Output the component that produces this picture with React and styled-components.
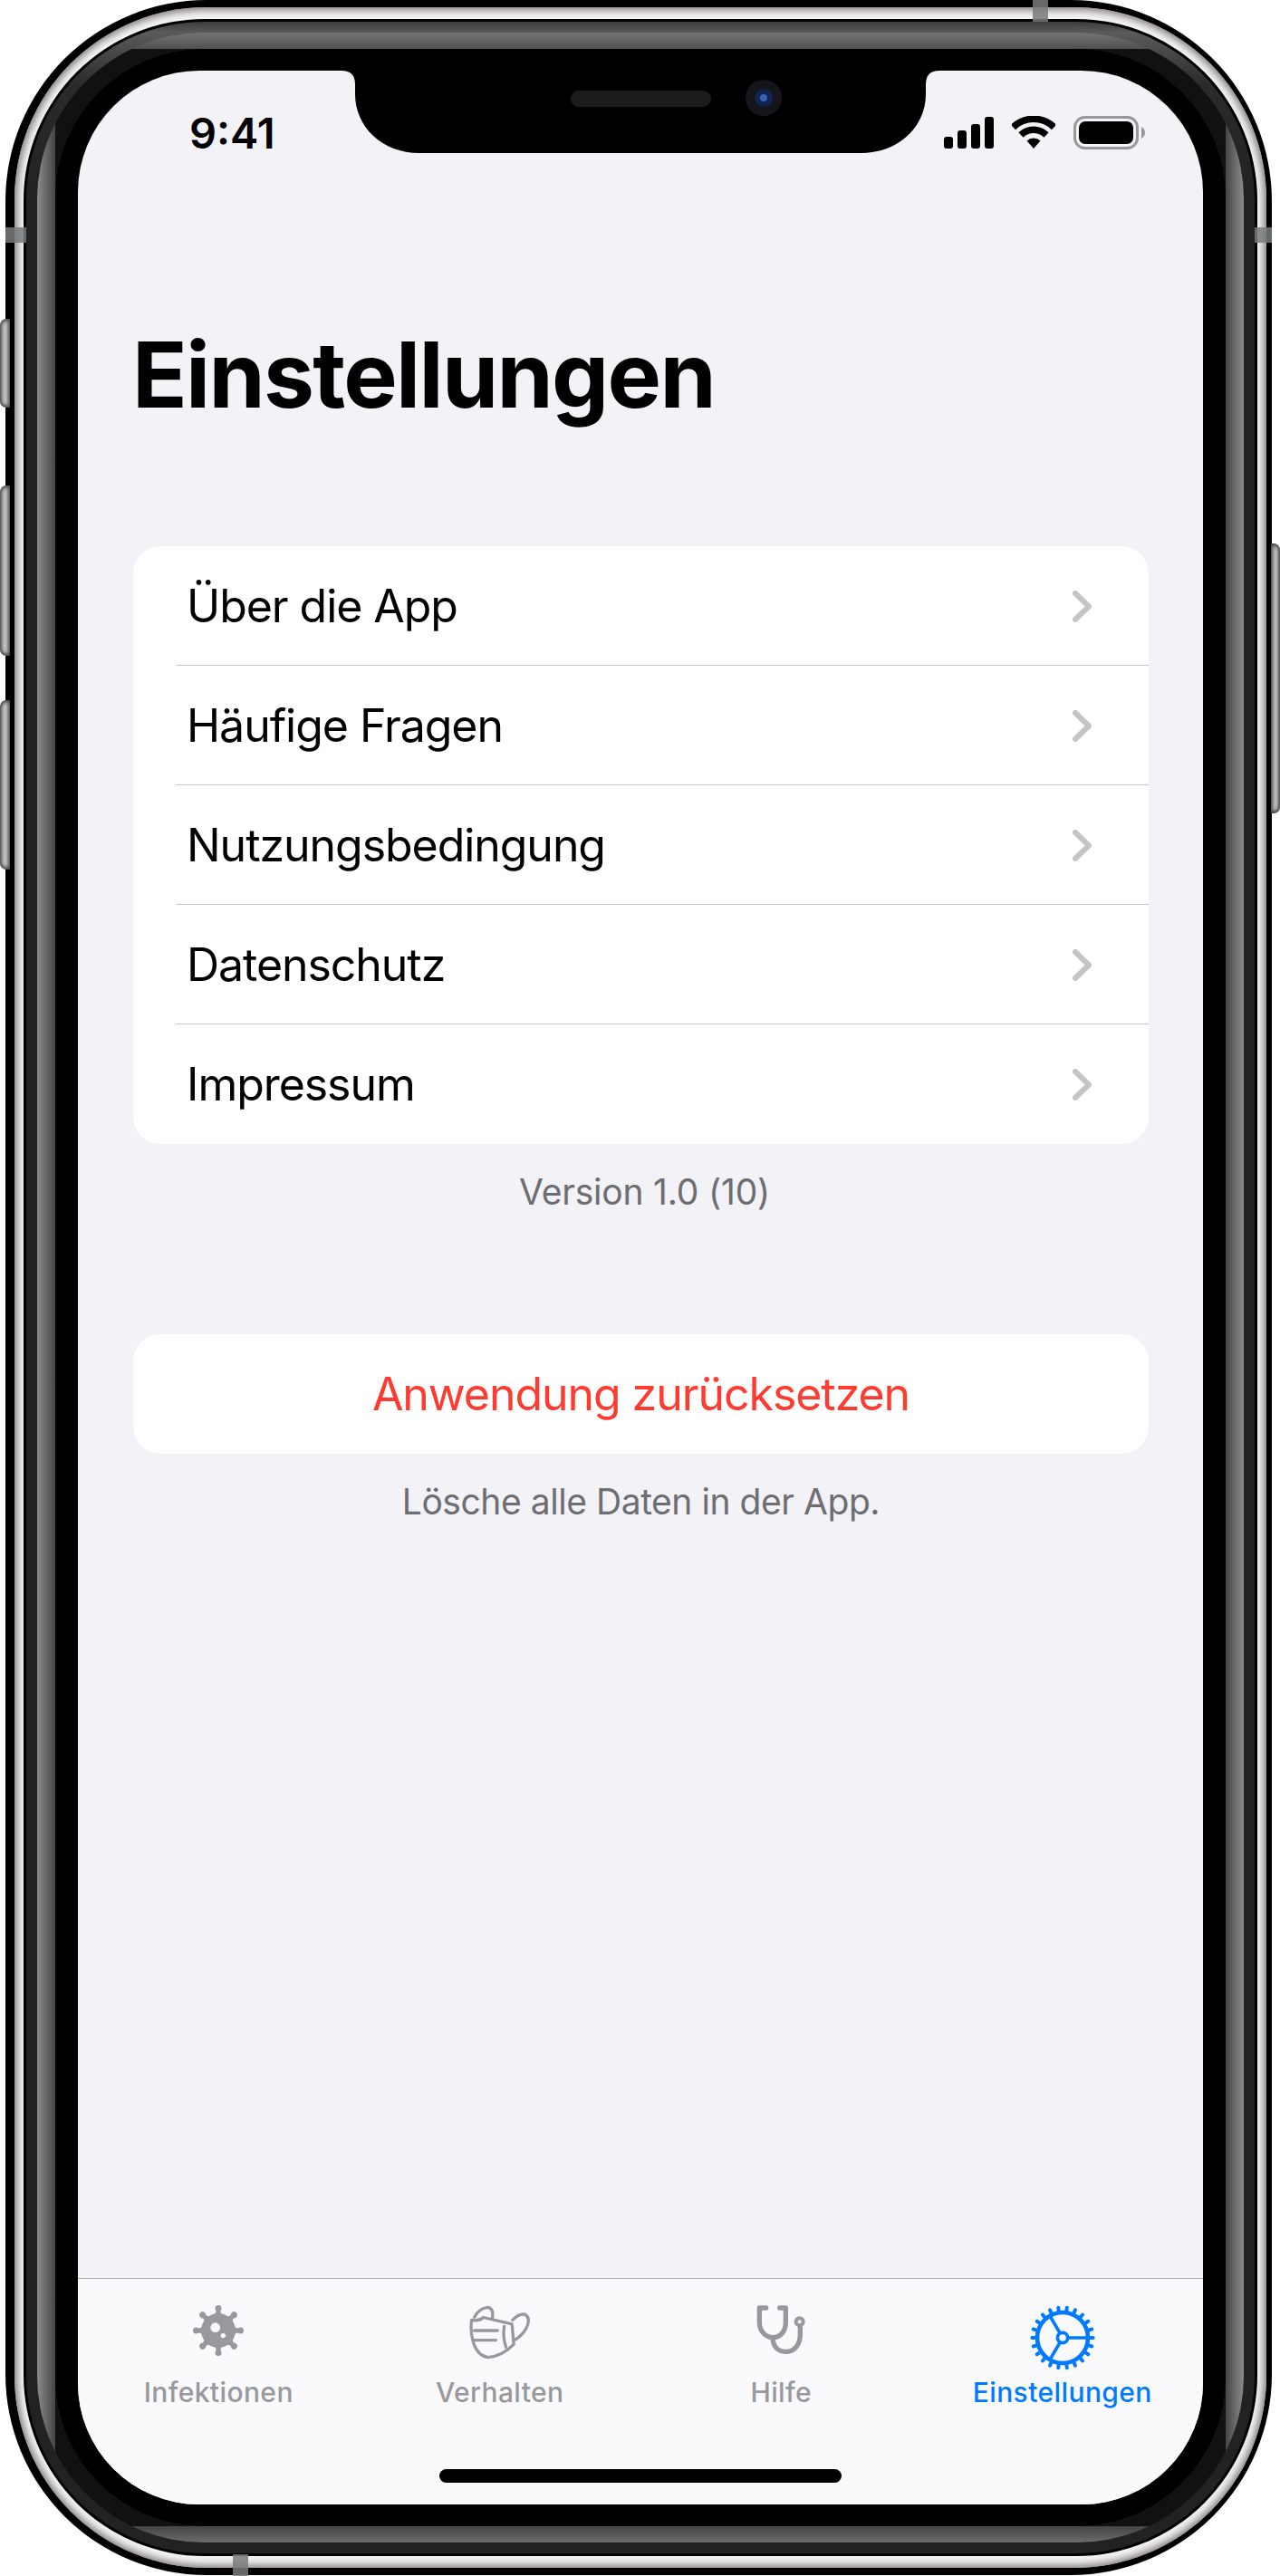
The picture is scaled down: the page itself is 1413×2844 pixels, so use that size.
import React from 'react';
import styled, { createGlobalStyle } from 'styled-components';

const Global = createGlobalStyle`
  html, body { margin: 0; padding: 0; background: #fff; }
  #root { width: 1413px; height: 2844px; overflow: hidden; }
`;

const Page = styled.div`
  position: relative;
  width: 1413px;
  height: 2844px;
  padding: 0 9px 1px 6px;
  box-sizing: border-box;
  font-family: Inter, "Noto Sans", "Liberation Sans", sans-serif;
  background: #fff;
`;
const Shell = styled.div`
  height: 100%;
  box-sizing: border-box;
  background: #000;
  border-radius: 222px;
  padding: 8px 6px 8px 10px;
`;
const SteelBand = styled.div`
  height: 100%;
  box-sizing: border-box;
  border-radius: 212px;
  padding: 13px 10px 13px 10px;
  background: #f4f4f4;
  box-shadow: inset 0 0 9px 3px #7d7876;
`;
const InnerEdge = styled.div`
  height: 100%;
  box-sizing: border-box;
  border-radius: 200px;
  background: #000;
  padding: 3px;
`;
const DarkBand = styled.div`
  height: 100%;
  box-sizing: border-box;
  border-radius: 197px;
  padding: 12px 12px 12px 12px;
  background: linear-gradient(180deg, #3c3c3c 0, #5a5a5a 12px, #2a2a2a 70px, #222 200px, #222 100%);
`;
const GreyBand = styled.div`
  height: 100%;
  box-sizing: border-box;
  border-radius: 184px;
  padding: 18px 20px;
  background:
    linear-gradient(90deg, #8c8c8c 0, #444 20px, transparent 20px, transparent calc(100% - 20px), #444 calc(100% - 20px), #8c8c8c 100%),
    linear-gradient(180deg, #747474 0, #505050 18px, #111 18px, #111 calc(100% - 18px), #444 calc(100% - 18px), #6c6c6c 100%);
`;
const Bezel = styled.div`
  height: 100%;
  box-sizing: border-box;
  border-radius: 164px;
  padding: 24px 25px;
  background: #000;
`;
const Screen = styled.div`
  position: relative;
  height: 100%;
  border-radius: 134px;
  background: #f2f2f7;
  overflow: hidden;
  display: flex;
  flex-direction: column;
`;
const SideButton = styled.div`
  position: absolute;
  left: 0;
  width: 11px;
  top: ${p => p.$top}px;
  height: ${p => p.$h}px;
  border-radius: 7px 0 0 7px;
  background: #cfcfcf;
  box-shadow: inset 0 0 4px 2px #3a3a3a;
`;
const PowerButton = styled.div`
  position: absolute;
  right: 0;
  top: 600px;
  width: 10px;
  height: 298px;
  border-radius: 0 7px 7px 0;
  background: #d4d4d4;
  box-shadow: inset 0 0 4px 2px #333;
`;
const Antenna = styled.div`
  position: absolute;
  background: rgba(120, 122, 124, 0.85);
  ${p => p.$css}
`;
const Notch = styled.svg`
  position: absolute;
  left: 291px;
  top: 0;
`;
const StatusBar = styled.div`
  height: 136px;
  flex: none;
  display: flex;
  align-items: center;
  justify-content: space-between;
  box-sizing: border-box;
  padding: 0 64px 0 123px;
`;
const Time = styled.div`
  font-size: 47px;
  font-weight: 600;
  color: #000;
  line-height: 1;
`;
const StatusIcons = styled.div`
  display: flex;
  align-items: center;
  gap: 20px;
`;
const Title = styled.h1`
  margin: 140px 0 0 60px;
  font-size: 100px;
  line-height: 120px;
  font-weight: 700;
  letter-spacing: -1.7px;
  color: #000;
`;
const Content = styled.div`
  display: flex;
  flex-direction: column;
  padding: 0 60px 0 61px;
  margin-top: 129px;
`;
const Card = styled.div`
  background: #fff;
  border-radius: 30px;
  overflow: hidden;
`;
const Row = styled.div`
  position: relative;
  height: 132px;
  display: flex;
  align-items: center;
  justify-content: space-between;
  box-sizing: border-box;
  padding: 0 63px 0 59px;
  font-size: 50px;
  letter-spacing: -1.05px;
  color: #000;
  &:not(:last-child)::after {
    content: '';
    position: absolute;
    left: 47px;
    right: 0;
    bottom: 0;
    height: 1px;
    background: #c6c6c8;
  }
`;
const ResetRow = styled(Row)`
  justify-content: center;
  padding: 0;
  color: #ff3b30;
`;
const Footnote = styled.div`
  text-align: center;
  font-size: 39px;
  line-height: 48px;
  letter-spacing: ${p => (p.$dx ? '-0.2px' : '-0.45px')};
  color: #6d6d72;
  margin-top: 29px;
  transform: translateX(${p => p.$dx || 0}px);
`;
const ResetSpacer = styled.div`
  height: 133px;
`;
const TabBar = styled.div`
  margin-top: auto;
  flex: none;
  border-top: 1px solid #a9a9ac;
  background: #fafafc;
  display: flex;
  flex-direction: column;
  align-items: center;
`;
const Tabs = styled.div`
  align-self: stretch;
  display: grid;
  grid-template-columns: repeat(4, 1fr);
`;
const Tab = styled.div`
  display: flex;
  flex-direction: column;
  align-items: center;
  padding-top: 29px;
  color: ${p => (p.$active ? '#007aff' : '#98989d')};
`;
const IconSlot = styled.div`
  height: 78px;
`;
const TabLabel = styled.div`
  font-size: 30px;
  line-height: 36px;
  font-weight: 500;
  letter-spacing: 0.4px;
`;
const HomeIndicator = styled.div`
  width: 444px;
  height: 15px;
  border-radius: 8px;
  background: #000;
  margin: 67px 0 24px;
`;

const Chevron = () => (
  <svg width="21" height="35" viewBox="0 0 21 35" fill="none" stroke="#c4c4c7" strokeWidth="6" strokeLinecap="round" strokeLinejoin="round">
    <path d="M3 3 L18 17.5 L3 32" />
  </svg>
);

const Signal = () => (
  <svg width="55" height="35" viewBox="0 0 55 35" fill="#000">
    <rect x="0" y="22" width="10" height="13" rx="3" />
    <rect x="15" y="15" width="10" height="20" rx="3" />
    <rect x="30" y="8" width="10" height="27" rx="3" />
    <rect x="45" y="0" width="10" height="35" rx="3" />
  </svg>
);

const Wifi = () => (
  <svg width="48" height="36" viewBox="0 0 48 36" fill="none" stroke="#000" strokeWidth="7.5">
    <path d="M1.5 12.5 A32 32 0 0 1 46.5 12.5" />
    <path d="M10 21 A20 20 0 0 1 38 21" />
    <path d="M16.5 27.5 L24 36 L31.5 27.5 A11 11 0 0 0 16.5 27.5 Z" fill="#000" stroke="none" />
  </svg>
);

const Battery = () => (
  <svg width="79" height="37" viewBox="0 0 79 37">
    <rect x="1.5" y="1.5" width="69" height="34" rx="11" fill="none" stroke="#98989c" strokeWidth="3" />
    <rect x="6" y="6" width="60" height="25" rx="7" fill="#000" />
    <path d="M75 12 C78 14 79 16 79 18.5 C79 21 78 23 75 25 Z" fill="#98989c" />
  </svg>
);

const ANGLES = [0, 45, 90, 135, 180, 225, 270, 315];
const VirusIcon = () => (
  <svg width="56" height="56" viewBox="-28 -28 56 56" fill="#98989d" style={{ display: 'block' }}>
    <circle r="19" />
    {ANGLES.map(a => (
      <g key={a} transform={`rotate(${a})`}>
        <path d="M-6 -16 Q-2.2 -18 -2.2 -24 L2.2 -24 Q2.2 -18 6 -16 Z" />
        <circle cy="-24.5" r="3.5" />
      </g>
    ))}
    <circle cx="-3.3" cy="-3.3" r="5.4" fill="#fafafc" />
    <circle cx="5.3" cy="5.6" r="2.7" fill="#fafafc" />
  </svg>
);

const MaskIcon = () => (
  <svg width="68" height="60" viewBox="83 45 206 182" fill="none" stroke="#98989d" strokeWidth="10" strokeLinecap="round" strokeLinejoin="round" style={{ display: 'block' }}>
    <path d="M91 95 Q115 100 130 86 L226 108 L232 176 Q195 215 146 220 Q112 215 97 172 Q85 130 91 95 Z" />
    <path d="M100 85 Q115 56 145 52 Q166 56 160 88" />
    <path d="M228 95 Q250 72 270 76 Q290 90 274 122 Q260 146 238 160" />
    <path d="M100 130 L178 130" />
    <path d="M100 162 L172 162" />
    <path d="M200 116 Q194 150 206 186" />
  </svg>
);

const StethoscopeIcon = () => (
  <svg width="55" height="54" viewBox="133 48 165 162" fill="none" stroke="#98989d" strokeWidth="16" strokeLinecap="round" strokeLinejoin="round" style={{ display: 'block' }}>
    <path d="M165 57 H143 V105 C143 135 165 155 188 155 C212 155 230 135 230 105 V57 H210" />
    <path d="M188 155 C186 185 205 202 230 202 C258 202 278 180 278 145 V118" />
    <circle cx="276" cy="103" r="12" strokeWidth="12" />
  </svg>
);

const TEETH = Array.from({ length: 22 }, (_, i) => (i * 360) / 22);
const GearIcon = () => (
  <svg width="72" height="72" viewBox="-108 -108 216 216" fill="none" stroke="#007aff" style={{ display: 'block' }}>
    <circle r="84" strokeWidth="14" />
    {TEETH.map(a => (
      <path key={a} transform={`rotate(${a})`} d="M92 0 H101" strokeWidth="12" strokeLinecap="round" />
    ))}
    <path d="M18 0 H84 M-9 -16 L-43 -74 M-9 16 L-43 74" strokeWidth="11" />
    <circle r="17" strokeWidth="11" fill="#fafafc" />
  </svg>
);

const ROWS = ['Über die App', 'Häufige Fragen', 'Nutzungsbedingung', 'Datenschutz', 'Impressum'];
const TABS = [
  { label: 'Infektionen', Icon: VirusIcon },
  { label: 'Verhalten', Icon: MaskIcon },
  { label: 'Hilfe', Icon: StethoscopeIcon },
  { label: 'Einstellungen', Icon: GearIcon, active: true },
];

export default function App() {
  return (
    <Page>
      <Global />
      <Shell>
        <SteelBand>
          <InnerEdge>
            <DarkBand>
              <GreyBand>
                <Bezel>
                  <Screen>
                    <StatusBar>
                      <Time>9:41</Time>
                      <StatusIcons>
                        <Signal />
                        <Wifi />
                        <Battery />
                      </StatusIcons>
                    </StatusBar>
                    <Title>Einstellungen</Title>
                    <Content>
                      <Card>
                        {ROWS.map(r => (
                          <Row key={r}>
                            {r}
                            <Chevron />
                          </Row>
                        ))}
                      </Card>
                      <Footnote $dx={4}>Version 1.0 (10)</Footnote>
                      <ResetSpacer />
                      <Card>
                        <ResetRow>Anwendung zurücksetzen</ResetRow>
                      </Card>
                      <Footnote>Lösche alle Daten in der App.</Footnote>
                    </Content>
                    <TabBar>
                      <Tabs>
                        {TABS.map(({ label, Icon, active }) => (
                          <Tab key={label} $active={active}>
                            <IconSlot><Icon /></IconSlot>
                            <TabLabel>{label}</TabLabel>
                          </Tab>
                        ))}
                      </Tabs>
                      <HomeIndicator />
                    </TabBar>
                    <Notch width="660" height="91" viewBox="0 0 660 91">
                      <path d="M0 0 Q15 0 15 15 V26 C15 62 45 91 86 91 H574 C615 91 645 62 645 26 V15 Q645 0 660 0 Z" fill="#000" />
                      <rect x="253" y="22" width="155" height="18" rx="9" fill="#1c1c1c" />
                      <circle cx="466" cy="30" r="20" fill="#15151b" />
                      <circle cx="466" cy="30" r="10" fill="#14234f" />
                      <circle cx="466" cy="30" r="4" fill="#3563b8" />
                    </Notch>
                  </Screen>
                </Bezel>
              </GreyBand>
            </DarkBand>
          </InnerEdge>
        </SteelBand>
      </Shell>
      <SideButton $top={352} $h={98} />
      <SideButton $top={536} $h={188} />
      <SideButton $top={773} $h={187} />
      <PowerButton />
      <Antenna $css="left: 6px; top: 251px; width: 23px; height: 17px;" />
      <Antenna $css="left: 1385px; top: 251px; width: 19px; height: 17px;" />
      <Antenna $css="left: 1140px; top: 0; width: 17px; height: 24px;" />
      <Antenna $css="left: 257px; top: 2820px; width: 17px; height: 24px;" />
    </Page>
  );
}
